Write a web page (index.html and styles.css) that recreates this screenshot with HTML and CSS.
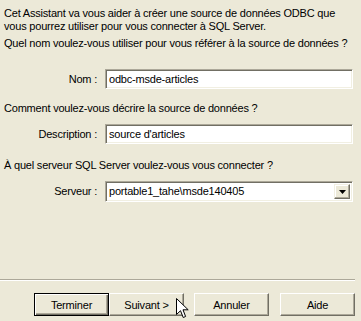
FILE: index.html
```html
<!DOCTYPE html>
<html lang="fr">
<head>
<meta charset="UTF-8">
<title>Assistant source de données</title>
<link rel="stylesheet" href="styles.css">
</head>
<body>

<div class="wizard">
  <p class="intro">Cet Assistant va vous aider à créer une source de données ODBC que<br>vous pourrez utiliser pour vous connecter à SQL Server.</p>

  <p class="question q-name">Quel nom voulez-vous utiliser pour vous référer à la source de données ?</p>
  <div class="field f-name">
    <span class="label">Nom :</span>
    <div class="edit">odbc-msde-articles</div>
  </div>

  <p class="question q-desc">Comment voulez-vous décrire la source de données ?</p>
  <div class="field f-desc">
    <span class="label">Description :</span>
    <div class="edit">source d'articles</div>
  </div>

  <p class="question q-server">À quel serveur SQL Server voulez-vous vous connecter ?</p>
  <div class="field f-server">
    <span class="label">Serveur :</span>
    <div class="edit combo">
      <span class="value">portable1_tahe\msde140405</span>
      <span class="drop"><svg width="7" height="4" viewBox="0 0 7 4"><path d="M0 0h7L3.5 4z" fill="#000"/></svg></span>
    </div>
  </div>
</div>

<div class="separator"></div>

<div class="buttons">
  <button class="btn default">Terminer</button>
  <button class="btn">Suivant &gt;</button>
  <button class="btn cancel">Annuler</button>
  <button class="btn help">Aide</button>
</div>

<svg class="cursor" width="13" height="21" viewBox="0 0 13 21">
  <path d="M0.5 0.5V16.5L4.5 12.7L7.2 19.5L9.6 18.5L7 11.8H12.2Z" fill="#fff" stroke="#000" stroke-width="1" stroke-linejoin="miter"/>
</svg>

</body>
</html>
```

FILE: styles.css
```css
html, body {
  margin: 0;
  height: 100%;
}
body {
  background-color: #ECE9D8;
  font-family: "Liberation Sans", Arial, sans-serif;
  font-size: 11px;
  line-height: 13px;
  letter-spacing: -0.2px;
  color: #000;
  width: 361px;
  height: 321px;
  overflow: hidden;
  position: relative;
}
.wizard {
  padding: 7px 0 0 4px;
}
p {
  margin: 0;
  white-space: nowrap;
}
.q-name { margin-top: 4px; }
.q-desc { margin-top: 13px; }
.q-server { margin-top: 15px; }

.field {
  display: flex;
  align-items: center;
  gap: 8px;
}
.f-name { margin-top: 19px; }
.f-desc { margin-top: 9px; }
.f-server { margin-top: 9px; }

.label {
  width: 93px;
  text-align: right;
}
.edit {
  box-sizing: border-box;
  width: 248px;
  height: 20px;
  background: #fff;
  border: 1px solid;
  border-color: #ACA899 #fff #fff #ACA899;
  box-shadow: inset 1px 1px 0 #716F64, inset -1px -1px 0 #F1EFE2;
  padding: 3px 0 0 3px;
  white-space: nowrap;
}
.f-server .edit { height: 21px; }
.combo {
  display: flex;
  justify-content: space-between;
  padding: 2px 2px 2px 3px;
}
.combo .value { padding-top: 1px; }
.drop {
  box-sizing: border-box;
  width: 16px;
  height: 15px;
  background: #ECE9D8;
  border: 1px solid;
  border-color: #F1EFE2 #716F64 #716F64 #F1EFE2;
  box-shadow: inset -1px -1px 0 #ACA899, inset 1px 1px 0 #fff;
  display: flex;
  align-items: center;
  justify-content: center;
}

.separator {
  margin-top: 77px;
  width: 355px;
  height: 1px;
  background: #ACA899;
  border-bottom: 1px solid #fff;
}

.buttons {
  display: flex;
  padding: 12px 0 0 34px;
}
.btn {
  box-sizing: border-box;
  width: 75px;
  height: 23px;
  margin: 0;
  padding: 0;
  font-family: "Liberation Sans", Arial, sans-serif;
  font-size: 11px;
  letter-spacing: -0.2px;
  color: #000;
  background: #ECE9D8;
  border: 1px solid;
  border-color: #fff #716F64 #716F64 #fff;
  box-shadow: inset -1px -1px 0 #ACA899;
}
.btn.default {
  border: 1px solid #000;
  box-shadow: inset 1px 1px 0 #fff, inset -1px -1px 0 #716F64, inset -2px -2px 0 #ACA899;
}
.cancel { margin-left: 10px; }
.help { margin-left: 11px; }

.cursor {
  position: absolute;
  left: 176px;
  top: 298px;
}
```
